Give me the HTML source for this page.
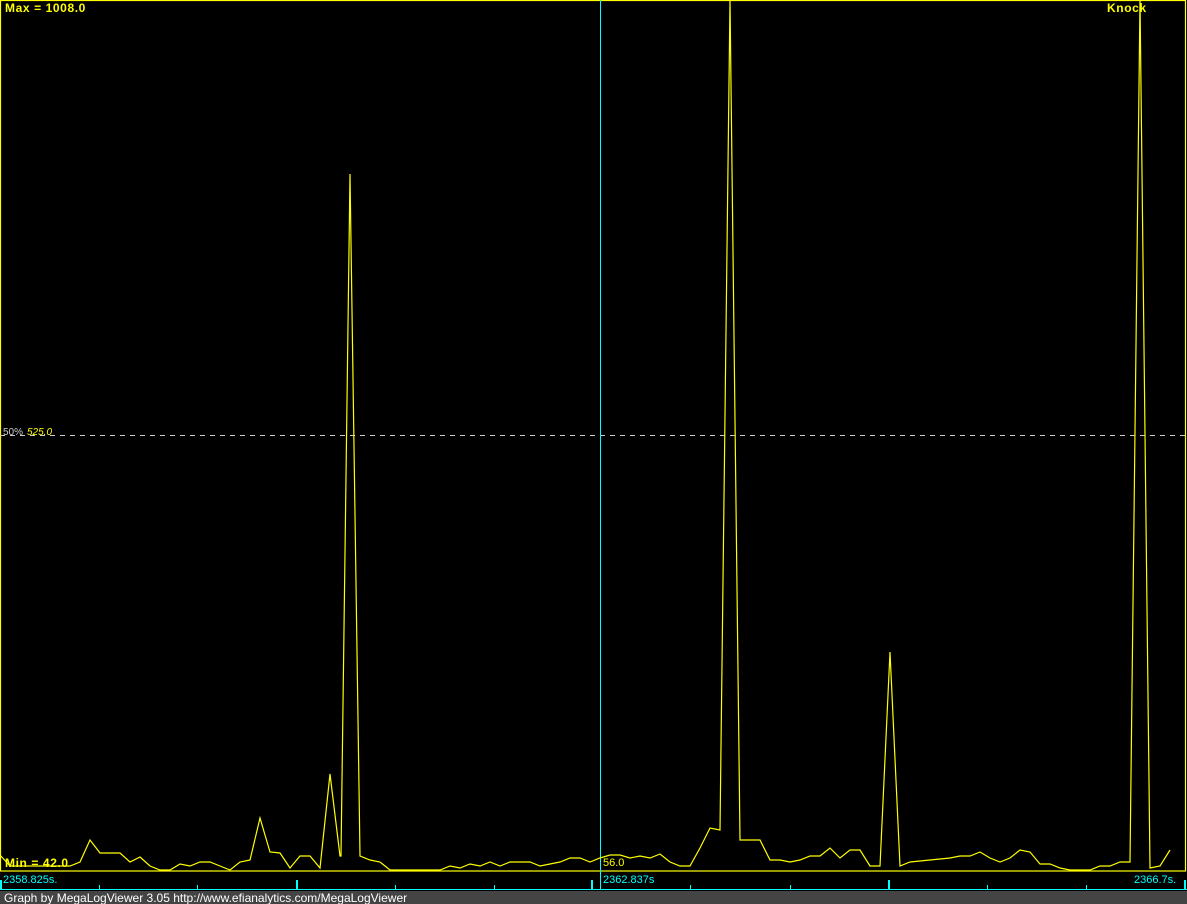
<!DOCTYPE html>
<html><head><meta charset="utf-8"><style>
html,body{margin:0;padding:0;background:#000;width:1187px;height:904px;overflow:hidden}
svg{display:block}
text{font-family:"Liberation Sans",sans-serif}
</style></head><body>
<svg width="1187" height="904" viewBox="0 0 1187 904">
<rect width="1187" height="904" fill="#000"/>
<rect x="0" y="891" width="1187" height="13" fill="#444"/>
<text x="4" y="902" font-size="12" fill="#fff">Graph by MegaLogViewer 3.05 http://www.efianalytics.com/MegaLogViewer</text>
<rect x="0.5" y="0.5" width="1185" height="870.5" fill="none" stroke="#ff0" stroke-width="1.2"/>
<line x1="0" y1="435.5" x2="1187" y2="435.5" stroke="#ccc" stroke-dasharray="5,5"/>
<line x1="600.5" y1="0" x2="600.5" y2="890" stroke="#0ff"/>
<line x1="0" y1="889.5" x2="1187" y2="889.5" stroke="#0ff"/>
<g stroke="#0ff" stroke-width="1">
<line x1="99.5" y1="885" x2="99.5" y2="890"/><line x1="197.5" y1="885" x2="197.5" y2="890"/>
<line x1="395.5" y1="885" x2="395.5" y2="890"/><line x1="494.5" y1="885" x2="494.5" y2="890"/>
<line x1="690.5" y1="885" x2="690.5" y2="890"/><line x1="790.5" y1="885" x2="790.5" y2="890"/>
<line x1="987.5" y1="885" x2="987.5" y2="890"/><line x1="1086.5" y1="885" x2="1086.5" y2="890"/>
</g>
<g stroke="#0ff" stroke-width="2">
<line x1="1" y1="880" x2="1" y2="890"/><line x1="297" y1="880" x2="297" y2="890"/>
<line x1="592" y1="880" x2="592" y2="890"/><line x1="889" y1="880" x2="889" y2="890"/>
<line x1="1185" y1="880" x2="1185" y2="890"/>
</g>
<polyline fill="none" stroke="#ff0" stroke-width="1.2" points="0,855 10,866 70,866 80,862 90,840 100,853 120,853 130,862 140,857 150,866 160,870 170,870 180,864 190,866 200,862 210,862 220,866 230,870 240,862 250,860 260,818 270,852 280,853 290,868 300,856 310,856 320,868 330,774 340,856 341,856 350,174 360,856 370,860 380,862 390,870 440,870 450,866 460,868 470,864 480,866 490,862 500,866 510,862 530,862 540,866 550,864 560,862 570,858 580,858 590,862 600,858 610,855 620,855 630,858 640,856 650,858 660,854 670,862 680,866 690,866 700,848 710,828 720,830 730,0 740,840 760,840 770,860 780,860 790,862 800,860 810,856 820,856 830,848 840,858 850,850 860,850 870,866 880,866 890,652 900,866 910,862 930,860 950,858 960,856 970,856 980,852 990,858 1000,862 1010,858 1020,850 1030,852 1040,864 1050,864 1060,868 1070,870 1090,870 1100,866 1110,866 1120,862 1130,862 1140,0 1150,868 1160,866 1170,850"/>
<text x="5" y="12" font-size="12" font-weight="bold" fill="#ff0" letter-spacing="0.6">Max = 1008.0</text>
<text x="1107" y="12" font-size="12" font-weight="bold" fill="#ff0" letter-spacing="0.6">Knock</text>
<text x="5" y="867" font-size="12" font-weight="bold" fill="#ff0" letter-spacing="0.6">Min = 42.0</text>
<text x="3" y="435" font-size="10" fill="#ccc">50%</text>
<text x="27" y="435" font-size="10" fill="#ff0" font-style="italic">525.0</text>
<text x="603" y="866" font-size="11" fill="#ff0">56.0</text>
<text x="3" y="883" font-size="11" fill="#0ff">2358.825s.</text>
<text x="603" y="883" font-size="11" fill="#0ff">2362.837s</text>
<text x="1134" y="883" font-size="11" fill="#0ff">2366.7s.</text>
</svg>
</body></html>
